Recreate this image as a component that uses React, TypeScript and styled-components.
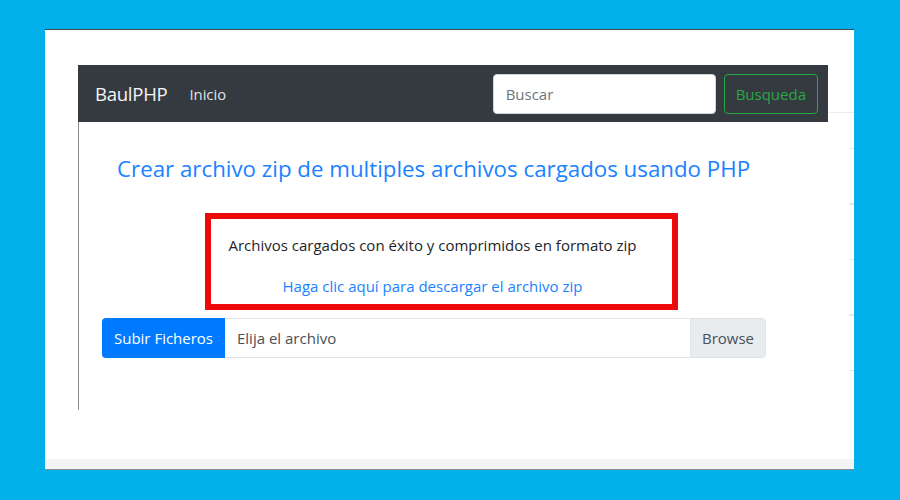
import React from 'react'
import styled, { createGlobalStyle } from 'styled-components'

const font = `"Open Sans", "Noto Sans", "Liberation Sans", sans-serif`

const GlobalStyle = createGlobalStyle`
  html, body {
    margin: 0;
    padding: 0;
    background: #02b1e9;
    font-family: ${font};
  }
  * {
    box-sizing: border-box;
  }
`

const Stage = styled.div`
  width: 900px;
  height: 500px;
  padding: 29px 0 0 45px;
`

const Card = styled.div`
  position: relative;
  width: 809px;
  height: 441px;
  background: #ffffff;
  border-top: 1px solid #3d4a52;
  border-bottom: 1px solid #8a8a8a;
  display: flex;
  flex-direction: column;
`

const Rail = styled.div`
  position: absolute;
  right: 0;
  top: 82px;
  width: 26px;
  height: 300px;
  border-top: 1px solid #ececec;
  &::after {
    content: '';
    position: absolute;
    right: 0;
    top: 35px;
    width: 5px;
    height: 230px;
    background: repeating-linear-gradient(
      to bottom,
      #e6e6e6 0,
      #e6e6e6 1px,
      transparent 1px,
      transparent 55.5px
    );
  }
`

const Browser = styled.div`
  flex: 1;
  margin: 35px 0 0 33px;
  width: 750px;
  display: flex;
  flex-direction: column;
`

const Navbar = styled.nav`
  height: 57px;
  background: #343a40;
  display: flex;
  align-items: center;
  padding: 0 10px 0 17px;
`

const Brand = styled.span`
  font-size: 18.6px;
  color: #f4f5f6;
  margin-right: 22px;
  letter-spacing: -0.3px;
`

const NavLink = styled.span`
  font-size: 14.8px;
  color: rgba(255, 255, 255, 0.88);
  flex: 1;
`

const SearchInput = styled.div`
  width: 223px;
  height: 40px;
  background: #ffffff;
  border: 1px solid #ced4da;
  border-radius: 4px;
  padding: 0 12px;
  display: flex;
  align-items: center;
  font-size: 15px;
  color: #6c757d;
  margin-right: 8px;
`

const OutlineButton = styled.button`
  height: 40px;
  padding: 0 11px;
  background: transparent;
  border: 1px solid #28a745;
  border-radius: 4px;
  color: #28a745;
  font-family: ${font};
  font-size: 15px;
`

const Content = styled.div`
  height: 288px;
  border-left: 1px solid #8f8f8f;
  padding: 30px 0 0 23px;
  display: flex;
  flex-direction: column;
`

const Title = styled.h1`
  margin: 0 0 28px 15px;
  font-size: 22.3px;
  font-weight: 400;
  color: #1a82ff;
  line-height: 33px;
`

const SuccessBox = styled.div`
  width: 473px;
  height: 97px;
  margin: 0 0 8px 103px;
  border: 6px solid #ee0a0a;
  padding: 14px 18px 0 0;
  display: flex;
  flex-direction: column;
  align-items: center;
  text-align: center;
`

const Message = styled.p`
  margin: 0 0 17px 0;
  font-size: 15px;
  line-height: 24px;
  color: #212529;
`

const DownloadLink = styled.a`
  font-size: 15px;
  line-height: 24px;
  color: #1a82ff;
  text-decoration: none;
`

const InputGroup = styled.div`
  width: 664px;
  height: 40px;
  display: flex;
`

const Prepend = styled.span`
  width: 123px;
  background: #007bff;
  color: #ffffff;
  border-radius: 4px 0 0 4px;
  display: flex;
  align-items: center;
  justify-content: center;
  font-size: 15px;
`

const FileField = styled.span`
  flex: 1;
  border: 1px solid #dfe3e7;
  border-left: none;
  border-right: none;
  display: flex;
  align-items: center;
  padding: 0 12px;
  font-size: 15px;
  color: #495057;
`

const BrowseButton = styled.span`
  width: 76px;
  background: #e9ecef;
  border: 1px solid #dfe3e7;
  border-radius: 0 4px 4px 0;
  display: flex;
  align-items: center;
  justify-content: center;
  font-size: 15px;
  color: #495057;
`

const Footer = styled.div`
  height: 10px;
  background: #f3f4f5;
`

export default function App() {
  return (
    <Stage>
      <GlobalStyle />
      <Card>
        <Rail />
        <Browser>
          <Navbar>
            <Brand>BaulPHP</Brand>
            <NavLink>Inicio</NavLink>
            <SearchInput>Buscar</SearchInput>
            <OutlineButton>Busqueda</OutlineButton>
          </Navbar>
          <Content>
            <Title>Crear archivo zip de multiples archivos cargados usando PHP</Title>
            <SuccessBox>
              <Message>Archivos cargados con éxito y comprimidos en formato zip</Message>
              <DownloadLink href="#">Haga clic aquí para descargar el archivo zip</DownloadLink>
            </SuccessBox>
            <InputGroup>
              <Prepend>Subir Ficheros</Prepend>
              <FileField>Elija el archivo</FileField>
              <BrowseButton>Browse</BrowseButton>
            </InputGroup>
          </Content>
        </Browser>
        <Footer />
      </Card>
    </Stage>
  )
}
